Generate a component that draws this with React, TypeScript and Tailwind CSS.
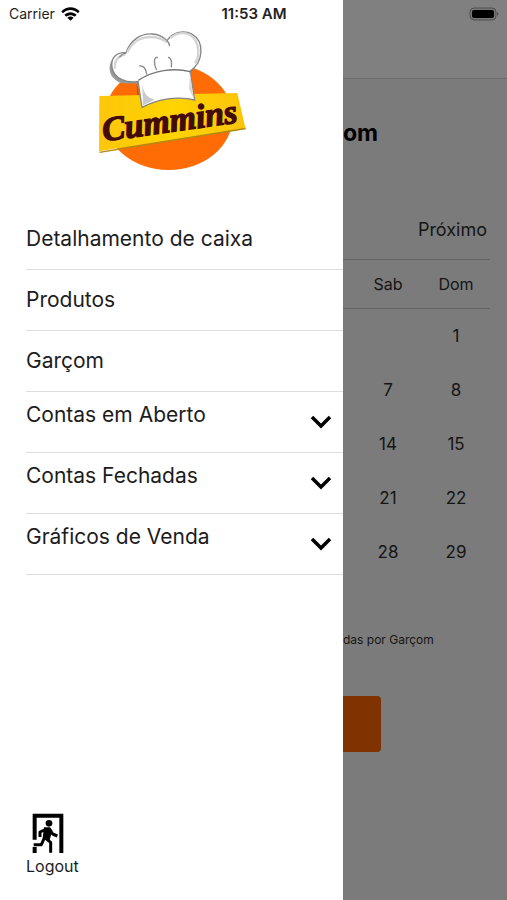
import React from "react";

const links = ["Detalhamento de caixa", "Produtos", "Garçom"];
const groups = ["Contas em Aberto", "Contas Fechadas", "Gráficos de Venda"];
const weekends = [
  ["", "1"],
  ["7", "8"],
  ["14", "15"],
  ["21", "22"],
  ["28", "29"],
];

function StatusBar() {
  return (
    <header className="pointer-events-none absolute inset-x-0 top-0 grid h-7 grid-cols-[1fr_auto_1fr] items-center pr-2 pl-[9px] text-[14px] leading-5 text-[#222]">
      <div className="flex items-center gap-[6px]">
        <span>Carrier</span>
        <svg width="19" height="14" viewBox="0 0 57 42" aria-hidden="true">
          <path d="M1 13C17-3 40-3 56 13l-5 6C37 6 20 6 6 19Z" fill="#000" />
          <path d="M10 23c11-10 26-10 37 0l-6 6c-7-6-18-6-25 0Z" fill="#000" />
          <path d="M19 32c6-5 13-5 19 0l-9.500 9Z" fill="#000" />
        </svg>
      </div>
      <span className="text-[15px] font-semibold">11:53 AM</span>
      <svg className="justify-self-end" width="30" height="14" viewBox="0 0 30 14" aria-hidden="true">
        <rect x="1" y="1" width="26" height="12" rx="4" fill="#777" stroke="#505050" />
        <rect x="3" y="3" width="22" height="8" rx="2" fill="#000" />
        <path d="M28 5q3 2 0 4Z" fill="#505050" />
      </svg>
    </header>
  );
}

function Logo() {
  return (
    <svg width="175" height="160" viewBox="0 0 525 480" role="img" aria-label="Cummins">
      <defs>
        <linearGradient id="banner" x1="0" x2="1">
          <stop offset="0" stopColor="#fdc60b" />
          <stop offset="0.5" stopColor="#ffd400" />
          <stop offset="1" stopColor="#fcc40c" />
        </linearGradient>
      </defs>
      <ellipse cx="251" cy="291" rx="192" ry="159" fill="#ff6b04" />
      <path d="M154 190L171 263 158 225Z" fill="#b84a00" />
      <path d="M43 395L44 399 483 328 480 320Z" fill="#b58a10" />
      <path d="M43 228L457 219 481 323 42 394Z" fill="url(#banner)" />
      <path d="M84 116C66 137 70 176 111 190L158 191 154 182 110 175Z" fill="#999" />
      <path
        d="M159 184C129 191 87 178 81 142C76 113 96 95 123 98C137 60 166 40 202 42C222 43 236 52 246 62C261 39 293 28 322 43C358 64 357 125 315 154L329 240C274 226 213 239 171 262Z"
        fill="#fff"
        stroke="#858585"
        strokeWidth="4"
      />
      <path d="M160 181C205 151 265 142 316 155" fill="none" stroke="#777" strokeWidth="4" />
      <path d="M172 196C177 219 186 234 209 239L174 256Z" fill="#c9c9cf" />
      <path d="M315 157L312 207 326 237Z" fill="#dadada" />
      <path d="M90 146C87 119 100 107 122 103M127 97C145 61 169 50 202 51C223 52 235 59 246 67M256 54C278 36 307 34 325 53C344 75 344 107 330 130" fill="none" stroke="#d4d4d6" strokeWidth="7" />
      <path d="M163 138C176 136 184 148 185 163M219 113C204 107 207 136 215 150M249 112C261 113 260 132 259 142M124 98Q111 101 103 112M246 62Q253 68 254 78" fill="none" stroke="#888" strokeWidth="4" />
      <text
        x="56"
        y="364"
        transform="rotate(-8 56 364)"
        fontFamily="'Liberation Serif', serif"
        fontSize="102"
        fontStyle="italic"
        fontWeight="700"
        fill="#430b09"
        stroke="#430b09"
        strokeWidth="4"
      >
        Cummins
      </text>
    </svg>
  );
}

function Chevron() {
  return (
    <svg width="22" height="14" viewBox="0 0 22 14" fill="none" aria-hidden="true">
      <path d="M2 2l9 9 9-9" stroke="#000" strokeWidth="3.500" />
    </svg>
  );
}

function ExitIcon() {
  return (
    <svg width="32" height="41" viewBox="0 0 96 123" aria-hidden="true">
      <path d="M2 2h92v118H82V14H14v66H2ZM2 102h12v18H2Z" fill="#000" />
      <circle cx="51" cy="31" r="10" fill="#000" />
      <path
        d="M42 49L24 57v15M43 48L37 75 28 95H5M42 77l14 11v31M52 48l10 15 14 6"
        fill="none"
        stroke="#000"
        strokeWidth="9"
        strokeLinejoin="round"
      />
      <path d="M36 43h18l7 10-9 31-20-8Z" fill="#000" />
    </svg>
  );
}

function Drawer() {
  return (
    <aside className="flex w-[343px] shrink-0 flex-col bg-white pt-5 pb-[22px] pl-[26px] text-[#1c1c1e]">
      <div className="pl-[59px]">
        <Logo />
      </div>
      <nav className="mt-[29px] text-[21px] leading-[30px]">
        {links.map((label) => (
          <a key={label} href="#" className="flex h-[61px] items-center border-b border-[#dedede]">
            {label}
          </a>
        ))}
        {groups.map((label) => (
          <button
            key={label}
            type="button"
            aria-expanded="false"
            className="flex h-[61px] w-full items-center justify-between border-b border-[#dedede] pr-[11px] text-left"
          >
            <span className="self-start pt-2">{label}</span>
            <Chevron />
          </button>
        ))}
      </nav>
      <button type="button" className="mt-auto flex flex-col items-start self-start text-[16px] leading-6">
        <span className="pl-[6px]">
          <ExitIcon />
        </span>
        Logout
      </button>
    </aside>
  );
}

function DimmedPage() {
  return (
    <main className="min-w-0 flex-1 overflow-hidden bg-[#7b7b7b] text-[#151515]">
      <div className="h-[79px] border-b border-[#6c6c6c] bg-[#808080]" />
      <h1 className="mt-9 text-[23px] leading-9 font-bold text-black">om</h1>
      <section className="mr-[17px] pt-[61px]">
        <div className="flex h-12 items-start justify-end border-b border-[#636363] pr-[3px] text-[18px] leading-9">
          <button type="button">Próximo</button>
        </div>
        <table className="w-full table-fixed border-collapse text-center text-[17px]">
          <colgroup>
            <col />
            <col className="w-[68px]" />
            <col className="w-[68px]" />
          </colgroup>
          <thead>
            <tr className="h-12 border-b border-[#636363] text-[16px]">
              <td />
              <th className="font-normal">Sab</th>
              <th className="font-normal">Dom</th>
            </tr>
          </thead>
          <tbody>
            {weekends.map(([sat, sun]) => (
              <tr key={sun} className="h-[54px]">
                <td />
                <td className="pt-[3px]">{sat}</td>
                <td className="pt-[3px]">{sun}</td>
              </tr>
            ))}
          </tbody>
        </table>
      </section>
      <p className="mt-[52px] text-[12px] leading-5">das por Garçom</p>
      <button type="button" aria-label="Garçom" className="mt-[46px] block h-14 w-[38px] rounded-r bg-[#803300]" />
    </main>
  );
}

export default function App() {
  return (
    <div className="relative flex min-h-screen font-['Inter','Liberation_Sans',sans-serif]">
      <Drawer />
      <DimmedPage />
      <StatusBar />
    </div>
  );
}
